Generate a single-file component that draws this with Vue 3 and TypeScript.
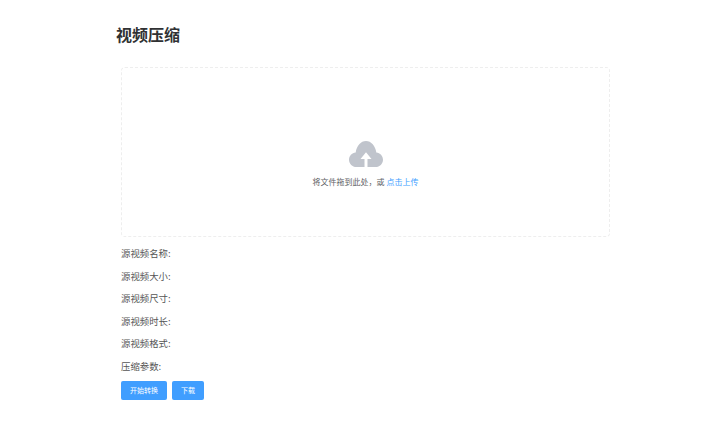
<script setup lang="ts">
const rows: string[] = ['源视频名称:', '源视频大小:', '源视频尺寸:', '源视频时长:', '源视频格式:', '压缩参数:']
</script>

<template>
  <div class="page">
    <h1 class="title">视频压缩</h1>
    <div class="content">
      <div class="dragger">
        <svg class="cloud" viewBox="0 0 34 26" width="34" height="26" aria-hidden="true">
          <path fill="#c0c4cc" d="M7.5 26C3.3 26 0 22.8 0 18.7c0-3.8 2.9-7 6.7-7.3C7.6 4.9 11.8 0 17 0c5.2 0 9.4 4.9 10.3 11.4 3.8.3 6.7 3.5 6.7 7.3 0 4.1-3.3 7.3-7.5 7.3h-8v-8h4L17 11.2 11.500 18h4v8H7.500z"/>
        </svg>
        <div class="hint">将文件拖到此处，或 <em>点击上传</em></div>
      </div>
      <div class="rows">
        <div v-for="row in rows" :key="row" class="row">{{ row }}</div>
      </div>
      <div class="actions">
        <button class="btn" type="button">开始转换</button>
        <button class="btn" type="button">下载</button>
      </div>
    </div>
  </div>
</template>

<style>
html, body { margin: 0; background: #fff; }
</style>

<style scoped>
.page {
  width: 722px;
  height: 433px;
  box-sizing: border-box;
  padding: 24px 0 0 116px;
  font-family: "Noto Sans CJK SC", "Liberation Sans", sans-serif;
  overflow: hidden;
}
.title {
  margin: 0;
  font-size: 16px;
  line-height: 20px;
  font-weight: 700;
  color: #303133;
}
.content {
  padding: 23px 0 0 5px;
}
.dragger {
  width: 489px;
  height: 170px;
  box-sizing: border-box;
  border: 1px dashed #eeeeee;
  border-radius: 4px;
  display: flex;
  flex-direction: column;
  align-items: center;
  padding-top: 73px;
}
.cloud { display: block; }
.hint {
  margin-top: 9px;
  font-size: 8px;
  line-height: 12px;
  color: #606266;
}
.hint em { font-style: normal; color: #409eff; }
.rows {
  display: flex;
  flex-direction: column;
  gap: 10.6px;
  padding-top: 10px;
}
.row {
  font-size: 9.4px;
  line-height: 12px;
  color: #555555;
}
.actions {
  display: flex;
  gap: 5px;
  margin-top: 9px;
}
.btn {
  height: 19px;
  padding: 0 9px;
  border: 0;
  border-radius: 2px;
  background: #409eff;
  color: #fff;
  font-family: inherit;
  font-size: 7px;
  line-height: 19px;
}
</style>
